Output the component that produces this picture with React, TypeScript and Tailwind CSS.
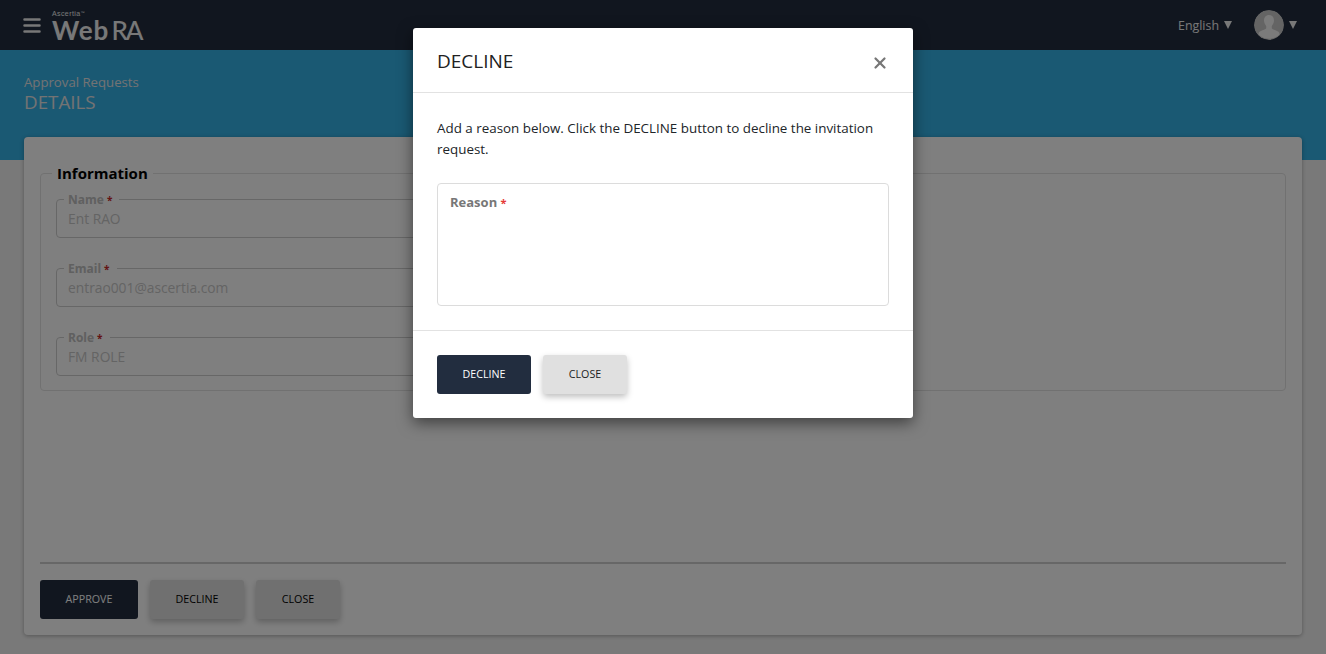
import { X } from "lucide-react";

const font = "font-['Open_Sans','Noto_Sans',sans-serif]";

function Field({ label, value }: { label: string; value: string }) {
    return (
        <fieldset className="h-[47px] w-[620px] rounded-[4px] border border-[#cfcfcf] pl-[11px]">
            <legend className="-ml-[4px] pl-[4px] pr-[7px] pt-[2px] text-[12px] leading-[14px] font-bold text-[#c0c0c0]">
                {label}
                <span className="ml-[3px] text-[10px] text-[#c62828]">*</span>
            </legend>
            <div className="mt-[2px] text-[13.800px] leading-[19px] text-[#c8c8c8]">{value}</div>
        </fieldset>
    );
}

function Caret() {
    return (
        <svg viewBox="0 0 8 8" className="h-[8px] w-[8px]" fill="currentColor">
            <path d="M0 0h8L4 8z" />
        </svg>
    );
}

function Avatar() {
    return (
        <svg viewBox="0 0 30 30" className="h-[30px] w-[30px] rounded-full">
            <circle cx="15" cy="15" r="15" fill="#c8c8c8" />
            <path
                d="M15 5c3.2 0 5 2.4 5 5.600 0 2.200-1 4.200-2.200 5.400v2.200c0 1 3.700 1.800 6.200 3.200 1.200.7 1.500 1.800 1.500 3.100a15 15 0 0 1-21 0c0-1.300.3-2.400 1.500-3.100 2.500-1.400 6.200-2.200 6.200-3.200V16c-1.200-1.200-2.200-3.200-2.200-5.400C10 7.400 11.800 5 15 5z"
                fill="#f6f6f6"
            />
        </svg>
    );
}

function Header() {
    return (
        <header className="flex h-[50px] items-center justify-between bg-[#222d3f] pl-[23px] pr-[29px]">
            <div className="flex items-center">
                {/* Hamburger */}
                <svg viewBox="0 0 18 15" className="h-[15px] w-[18px]" fill="none" stroke="#f0f0f0" strokeWidth="2.500" strokeLinecap="round">
                    <path d="M1.500 1.500h15M1.500 7.500h15M1.500 13.500h15" />
                </svg>
                <div className="ml-[11px] mt-[2px] flex flex-col text-[#f0f0f0]">
                    <span className="text-[7px] leading-[8px] tracking-[0.4px] font-['Liberation_Sans',sans-serif]">Ascertia<sup className="text-[4px]">™</sup></span>
                    <span className="whitespace-nowrap text-[26px] leading-[25px] font-['Lato',sans-serif]">
                        <span className="font-bold tracking-[1px]">Web</span>
                        <span className="ml-[2px] font-medium tracking-[-2px]">RA</span>
                    </span>
                </div>
            </div>
            <div className="flex items-center text-[#f0f0f0]">
                <span className="mt-[2px] text-[12.400px]">English</span>
                <span className="ml-[5px]"><Caret /></span>
                <span className="ml-[22px]"><Avatar /></span>
                <span className="ml-[5px]"><Caret /></span>
            </div>
        </header>
    );
}

function Details() {
    return (
        <main className="flex-1 bg-[#f3f3f3]">
            {/* Teal banner runs behind the top of the card */}
            <div className="h-[110px] bg-[#34b2e6] px-[24px] pt-[23px] text-[#e6e6e6]">
                <div className="text-[13.200px] leading-[19px]">Approval Requests</div>
                <div className="text-[18.800px] leading-[21px]">DETAILS</div>
            </div>
            <section className="relative mx-[24px] -mt-[23px] flex h-[498px] flex-col rounded-[4px] bg-white px-[16px] pt-[26px] pb-[16px] shadow-[0_1px_4px_rgba(0,0,0,0.3)]">
                <fieldset className="h-[228px] rounded-[4px] border border-[#e2e2e2] px-[15px]">
                    <legend className="-ml-[4px] px-[5px] text-[15px] leading-[20px] font-bold text-black">Information</legend>
                    <div className="mt-[8px] flex flex-col gap-[22px]">
                        <Field label="Name" value="Ent RAO" />
                        <Field label="Email" value="entrao001@ascertia.com" />
                        <Field label="Role" value="FM ROLE" />
                    </div>
                </fieldset>
                <div className="mt-auto border-t-2 border-[#cfcfcf] pt-[16px]">
                    <div className="flex gap-[12px]">
                        <button className="h-[39px] w-[98px] rounded-[3px] bg-[#222d3f] text-[10.700px] text-white">APPROVE</button>
                        <button className="h-[39px] w-[94px] rounded-[3px] bg-[#e0e0e0] text-[10.700px] text-black shadow-[0_3px_6px_rgba(0,0,0,0.25)]">DECLINE</button>
                        <button className="h-[39px] w-[84px] rounded-[3px] bg-[#e0e0e0] text-[10.700px] text-black shadow-[0_3px_6px_rgba(0,0,0,0.25)]">CLOSE</button>
                    </div>
                </div>
            </section>
        </main>
    );
}

function DeclineDialog() {
    return (
        <div className="absolute inset-0 flex items-start justify-center bg-black/50">
            <div className="mt-[28px] w-[500px] rounded-[3px] bg-white shadow-[0_5px_15px_rgba(0,0,0,0.5)]">
                <div className="flex h-[65px] items-center justify-between border-b border-[#e2e2e2] px-[24px]">
                    <h2 className="mt-[2px] text-[19px] text-[#212121]">DECLINE</h2>
                    <X size={18} strokeWidth={3} className="mt-[6px] text-[#777777]" />
                </div>
                <div className="px-[24px] pt-[25px]">
                    <p className="text-[13.400px] leading-[21px] text-[#212529]">
                        Add a reason below. Click the DECLINE button to decline the invitation request.
                    </p>
                    <div className="mt-[23px] h-[123px] rounded-[4px] border border-[#dcdcdc] px-[12px] pt-[9px] text-[13px] leading-[18px] font-bold text-[#777777]">
                        Reason <span className="text-[11px] text-[#e53935]">*</span>
                    </div>
                </div>
                <div className="mt-[24px] flex gap-[12px] border-t border-[#e2e2e2] p-[24px]">
                    <button className="h-[39px] w-[94px] rounded-[3px] bg-[#222d3f] text-[10.700px] text-white">DECLINE</button>
                    <button className="h-[39px] w-[84px] rounded-[3px] bg-[#e0e0e0] text-[10.700px] text-[#212121] shadow-[0_3px_6px_rgba(0,0,0,0.25)]">CLOSE</button>
                </div>
            </div>
        </div>
    );
}

export default function App() {
    return (
        <div className={`relative flex h-[654px] w-[1326px] flex-col overflow-hidden ${font}`}>
            <Header />
            <Details />
            <DeclineDialog />
        </div>
    );
}
